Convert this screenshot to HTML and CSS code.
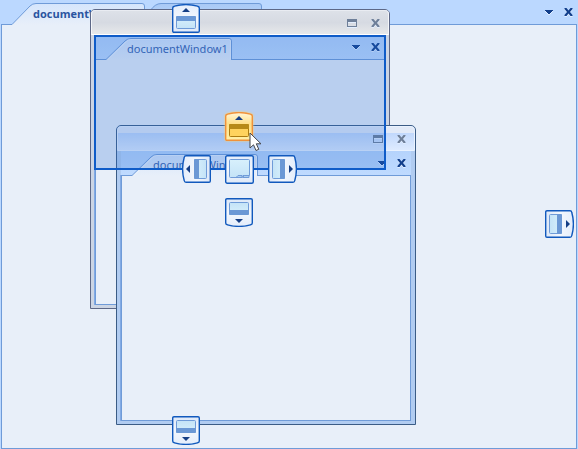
FILE: index.html
```html
<!DOCTYPE html>
<html lang="en">
<head>
<meta charset="utf-8">
<title>Document windows</title>
<link rel="stylesheet" href="styles.css">
</head>
<body>
<svg class="defs" aria-hidden="true">
  <defs>
    <linearGradient id="tabFill" x1="0" y1="0" x2="0" y2="1"><stop offset="0" stop-color="#d5e5fc"/><stop offset="1" stop-color="#e8eff9"/></linearGradient>
    <linearGradient id="tabDim" x1="0" y1="0" x2="0" y2="1"><stop offset="0" stop-color="#a9c9f5"/><stop offset="1" stop-color="#bbd8ff"/></linearGradient>
    <linearGradient id="guideFill" x1="0" y1="0" x2="0" y2="1"><stop offset="0" stop-color="#e4edfb"/><stop offset=".5" stop-color="#f3f7fd"/><stop offset="1" stop-color="#dde8f8"/></linearGradient>
    <linearGradient id="hotFill" x1="0" y1="0" x2="0" y2="1"><stop offset="0" stop-color="#fff6d8"/><stop offset=".4" stop-color="#ffe08a"/><stop offset="1" stop-color="#fff0a8"/></linearGradient>
    <linearGradient id="paneFill" x1="0" y1="0" x2="0" y2="1"><stop offset="0" stop-color="#d8f0fc"/><stop offset="1" stop-color="#c4e3f7"/></linearGradient>
  </defs>
  <symbol id="tab" viewBox="0 0 138 22">
    <path class="tab-fill" d="M2 22 L11 21.500 L30 3 Q32.500 .5 36 .5 H134 Q136.500 .5 136.500 3 V22 Z"/>
    <path class="tab-line" d="M0 21.500 H11 L30 3 Q32.500 .5 36 .5 H134 Q136.500 .5 136.500 3 V22"/>
    <path class="tab-shine" d="M13 21.500 L31 4 Q33 1.500 36 1.500 H134 Q135.500 1.500 135.500 3 V21"/>
  </symbol>
  <symbol id="guide" viewBox="0 0 29 29">
    <path class="guide-frame" d="M.7 27 V4 Q.7 2.500 2.500 2.200 Q14 -1 25.500 2.200 Q27.300 2.500 27.300 4 V27 Q27.300 28.300 26 28.300 H2 Q.7 28.300 .7 27 Z"/>
    <path class="guide-arrow" d="M10 8 H18 L14 4 Z"/>
    <rect class="guide-pane" x="4.500" y="12.500" width="19" height="12" rx="1"/>
    <path class="guide-band" d="M4 13 Q4 12 5 12 H23 Q24 12 24 13 V17 H4 Z"/>
  </symbol>
  <symbol id="close" viewBox="0 0 9 8">
    <path d="M.5 0H2.500L4.500 2.500L6.500 0H8.500V1L6 4L8.500 7V8H6.500L4.500 5.500L2.500 8H.5V7L3 4L.5 1Z"/>
  </symbol>
  <symbol id="menu" viewBox="0 0 8 4"><path d="M0 0h8v1h-1v1h-1v1h-1v1h-2v-1h-1v-1h-1v-1h-1z"/></symbol>
  <symbol id="maximize" viewBox="0 0 10 8"><path fill-rule="evenodd" d="M0 0h10v8h-10zM1 3h8v4h-8z"/></symbol>
</svg>

<main class="workspace">
  <section class="dock main-dock">
    <header class="strip">
      <nav class="tabs">
        <button class="tab active"><svg viewBox="0 0 146 22"><path class="tab-fill" d="M2 22 L12 21.500 L30 3 Q32.500 .5 36 .5 H142 Q144.500 .5 144.500 3 V22 Z"/><path class="tab-line" d="M1 21.500 H12 L30 3 Q32.500 .5 36 .5 H142 Q144.500 .5 144.500 3 V22"/></svg><span>documentWindow3</span></button>
        <button class="tab dim" aria-label="Second document"><svg viewBox="0 0 116 22"><path class="tab-fill" d="M4 22 V8 Q9 .5 15 .5 H113 Q115.500 .5 115.500 3 V22 Z"/><path class="tab-line" d="M4 8 Q9 .5 15 .5 H113 Q115.500 .5 115.500 3 V22"/></svg></button>
      </nav>
      <div class="actions">
        <button class="icon" aria-label="Documents"><svg class="menu"><use href="#menu"/></svg></button>
        <button class="icon" aria-label="Close"><svg class="close"><use href="#close"/></svg></button>
      </div>
    </header>
    <div class="page"></div>
  </section>

  <article class="window back">
    <header class="title">
      <button class="icon" aria-label="Maximize"><svg class="maximize"><use href="#maximize"/></svg></button>
      <button class="icon" aria-label="Close window"><svg class="close"><use href="#close"/></svg></button>
    </header>
    <section class="dock">
      <header class="strip">
        <nav class="tabs"><button class="tab"><svg><use href="#tab"/></svg><span>documentWindow1</span></button></nav>
        <div class="actions">
          <button class="icon" aria-label="Documents"><svg class="menu"><use href="#menu"/></svg></button>
          <button class="icon" aria-label="Close"><svg class="close"><use href="#close"/></svg></button>
        </div>
      </header>
      <div class="page"></div>
    </section>
  </article>

  <article class="window front">
    <header class="title">
      <button class="icon" aria-label="Maximize"><svg class="maximize"><use href="#maximize"/></svg></button>
      <button class="icon" aria-label="Close window"><svg class="close"><use href="#close"/></svg></button>
    </header>
    <section class="dock">
      <header class="strip">
        <nav class="tabs"><button class="tab"><svg><use href="#tab"/></svg><span>documentWindow2</span></button></nav>
        <div class="actions">
          <button class="icon" aria-label="Documents"><svg class="menu"><use href="#menu"/></svg></button>
          <button class="icon" aria-label="Close"><svg class="close"><use href="#close"/></svg></button>
        </div>
      </header>
      <div class="page"></div>
    </section>
  </article>

  <div class="drop-preview"></div>

  <button class="guide edge-top" aria-label="Dock to top edge"><svg><use href="#guide"/></svg></button>
  <button class="guide edge-right right" aria-label="Dock to right edge"><svg><use href="#guide"/></svg></button>
  <button class="guide edge-bottom down" aria-label="Dock to bottom edge"><svg><use href="#guide"/></svg></button>

  <div class="compass">
    <button class="guide north hot" aria-label="Dock above"><svg><use href="#guide"/></svg></button>
    <button class="guide west left" aria-label="Dock left"><svg><use href="#guide"/></svg></button>
    <button class="guide center" aria-label="Dock as tab"><svg viewBox="0 0 29 29">
      <rect class="guide-frame" x=".7" y=".7" width="27.600" height="27.600" rx="1.500"/>
      <path class="guide-pane" d="M5.500 4.500 H23.500 Q24.500 4.500 24.500 5.500 V20.500 H18 L16.500 22.500 H5.500 Q4.500 22.500 4.500 21.500 V5.500 Q4.500 4.500 5.500 4.500 Z"/>
      <path class="center-tabs" d="M11 22.500 L13 20.500 H17 V22.500 Z M17.500 22.500 L19.500 20.500 H24 V22.500 Z"/>
    </svg></button>
    <button class="guide east right" aria-label="Dock right"><svg><use href="#guide"/></svg></button>
    <button class="guide south down" aria-label="Dock below"><svg><use href="#guide"/></svg></button>
  </div>

  <svg class="cursor" viewBox="0 0 13 20" aria-hidden="true"><path d="M1 1 V16 L4.500 12.800 L7 18.500 L9.800 17.300 L7.300 11.800 H12 Z"/></svg>
</main>
</body>
</html>
```

FILE: styles.css
```css
* { box-sizing: border-box; }

body {
  margin: 0;
  background: #c8ddfb;
  font: 11px/16px "Noto Sans", "Open Sans", sans-serif;
}

.defs { position: absolute; width: 0; height: 0; }

button {
  margin: 0;
  padding: 0;
  border: 0;
  background: none;
  font: inherit;
  color: inherit;
}

svg { display: block; }

.workspace {
  position: relative;
  height: 100vh;
  overflow: hidden;
}

/* Tabbed document area */
.dock {
  display: flex;
  flex-direction: column;
  flex: 1;
}

.main-dock {
  height: 100%;
  background: #bbd8ff;
}

.strip {
  display: flex;
  justify-content: space-between;
  align-items: flex-end;
  height: 25px;
  background: #bbd8ff;
}

.window .strip { background: linear-gradient(#b5d3fc, #c0dbff); }

.tabs {
  position: relative;
  display: flex;
}

.page {
  flex: 1;
  background: #e8eff9;
  border: 1px solid #6f9bd8;
}

.main-dock .page { margin: -1px 1px 0; }

.window .page {
  margin-top: -1px;
  box-shadow: -1px 0 #82aae4;
}

.tab {
  position: relative;
  display: flex;
  width: 138px;
  height: 22px;
  padding: 3px 0 0 32px;
  color: #3561ae;
}

.tab svg {
  position: absolute;
  inset: 0;
  width: 138px;
  height: 22px;
}

.tab span { position: relative; }

.main-dock .active {
  width: 146px;
  padding-left: 33px;
  font-family: "Open Sans", "Noto Sans", sans-serif;
  font-weight: bold;
  color: #2a54a0;
}

.main-dock .active svg { width: 146px; }
.main-dock .dim,
.main-dock .dim svg { width: 116px; }

.tab-fill { fill: url(#tabFill); }
.dim .tab-fill { fill: url(#tabDim); }
.tab-line { fill: none; stroke: #6f9bd8; }
.tab-shine { fill: none; stroke: #f2f7ff; opacity: .6; }

.actions, .title {
  display: flex;
  align-items: center;
  color: #123f8c;
}

.actions {
  height: 25px;
  gap: 3px;
  padding: 0 2px 1px 0;
}

.icon {
  display: grid;
  place-items: center;
  width: 16px;
  height: 16px;
  filter: drop-shadow(0 1px #e2eeff);
}

.icon svg { fill: currentColor; }
.close { width: 9px; height: 8px; }
.menu { width: 8px; height: 4px; }
.maximize { width: 10px; height: 8px; }

/* Floating windows */
.window {
  position: absolute;
  display: flex;
  flex-direction: column;
  width: 300px;
  height: 300px;
  padding: 0 4px 3px;
  border: 1px solid #5d6887;
  border-radius: 5px 5px 0 0;
  background: #ccd5e4;
}

.back { left: 90px; top: 9px; }

.front {
  left: 116px;
  top: 125px;
  border-color: #3b5c86;
  background: #b1ccf1;
}

.title {
  justify-content: flex-end;
  gap: 7px;
  height: 25px;
  margin: 0 -4px;
  padding-right: 5px;
  color: #6e7f99;
  border: 1px solid #f4f6fa;
  border-top-color: #e9ecf2;
  border-bottom-color: #ffffff;
  border-radius: 4px 4px 0 0;
  background: linear-gradient(#dde1e8, #d6dae2 50%, #e6e8ea);
}

.front .title {
  border-color: #e9f2ff;
  background: linear-gradient(#e2eaf8 0 6px, #c1d8fc 6px, #deebff);
}

/* Area that the dragged window will occupy */
.drop-preview {
  position: absolute;
  left: 94px;
  top: 35px;
  width: 292px;
  height: 135px;
  border: 2px solid #0f5cc8;
  background: rgb(43 112 211 / 25%);
}

/* Docking guides */
.guide {
  --frame: #1159bd;
  --face: url(#guideFill);
  --pane: url(#paneFill);
  --pane-line: #6f9bd8;
  --band: #6b98d5;
  width: 29px;
  height: 29px;
}

.guide.hot {
  --frame: #f0913a;
  --face: url(#hotFill);
  --pane: #ffd35e;
  --pane-line: #ad7c10;
  --band: #b78a18;
  filter: drop-shadow(0 0 1px #ffd36a);
}

.guide svg { width: 29px; height: 29px; }
.left svg { transform: rotate(-90deg) scaleX(-1); }
.right svg { transform: rotate(90deg); }
.down svg { transform: scaleY(-1); }

.edge-top, .edge-right, .edge-bottom { position: absolute; }
.edge-top { left: 172px; top: 4px; }
.edge-right { right: 4px; top: calc(50% - 15px); }
.edge-bottom { left: 172px; bottom: 4px; }

.compass {
  position: absolute;
  left: 182px;
  top: 112px;
  display: grid;
  grid-template-columns: repeat(3, 29px);
  grid-template-rows: repeat(3, 29px);
  gap: 14px;
}

.north { grid-area: 1 / 2; }
.west { grid-area: 2 / 1; }
.center { grid-area: 2 / 2; }
.east { grid-area: 2 / 3; }
.south { grid-area: 3 / 2; }

.guide-frame {
  fill: var(--face);
  stroke: var(--frame);
  stroke-width: 1.4;
}

.guide-arrow { fill: #153e85; }
.guide-pane { fill: var(--pane); stroke: var(--pane-line); }
.guide-band { fill: var(--band); }
.center-tabs { fill: #a9cdf0; stroke: #6f9bd8; }

.cursor {
  position: absolute;
  left: 249px;
  top: 132px;
  width: 13px;
  height: 20px;
  fill: #ffffff;
  stroke: #45464b;
}
```
